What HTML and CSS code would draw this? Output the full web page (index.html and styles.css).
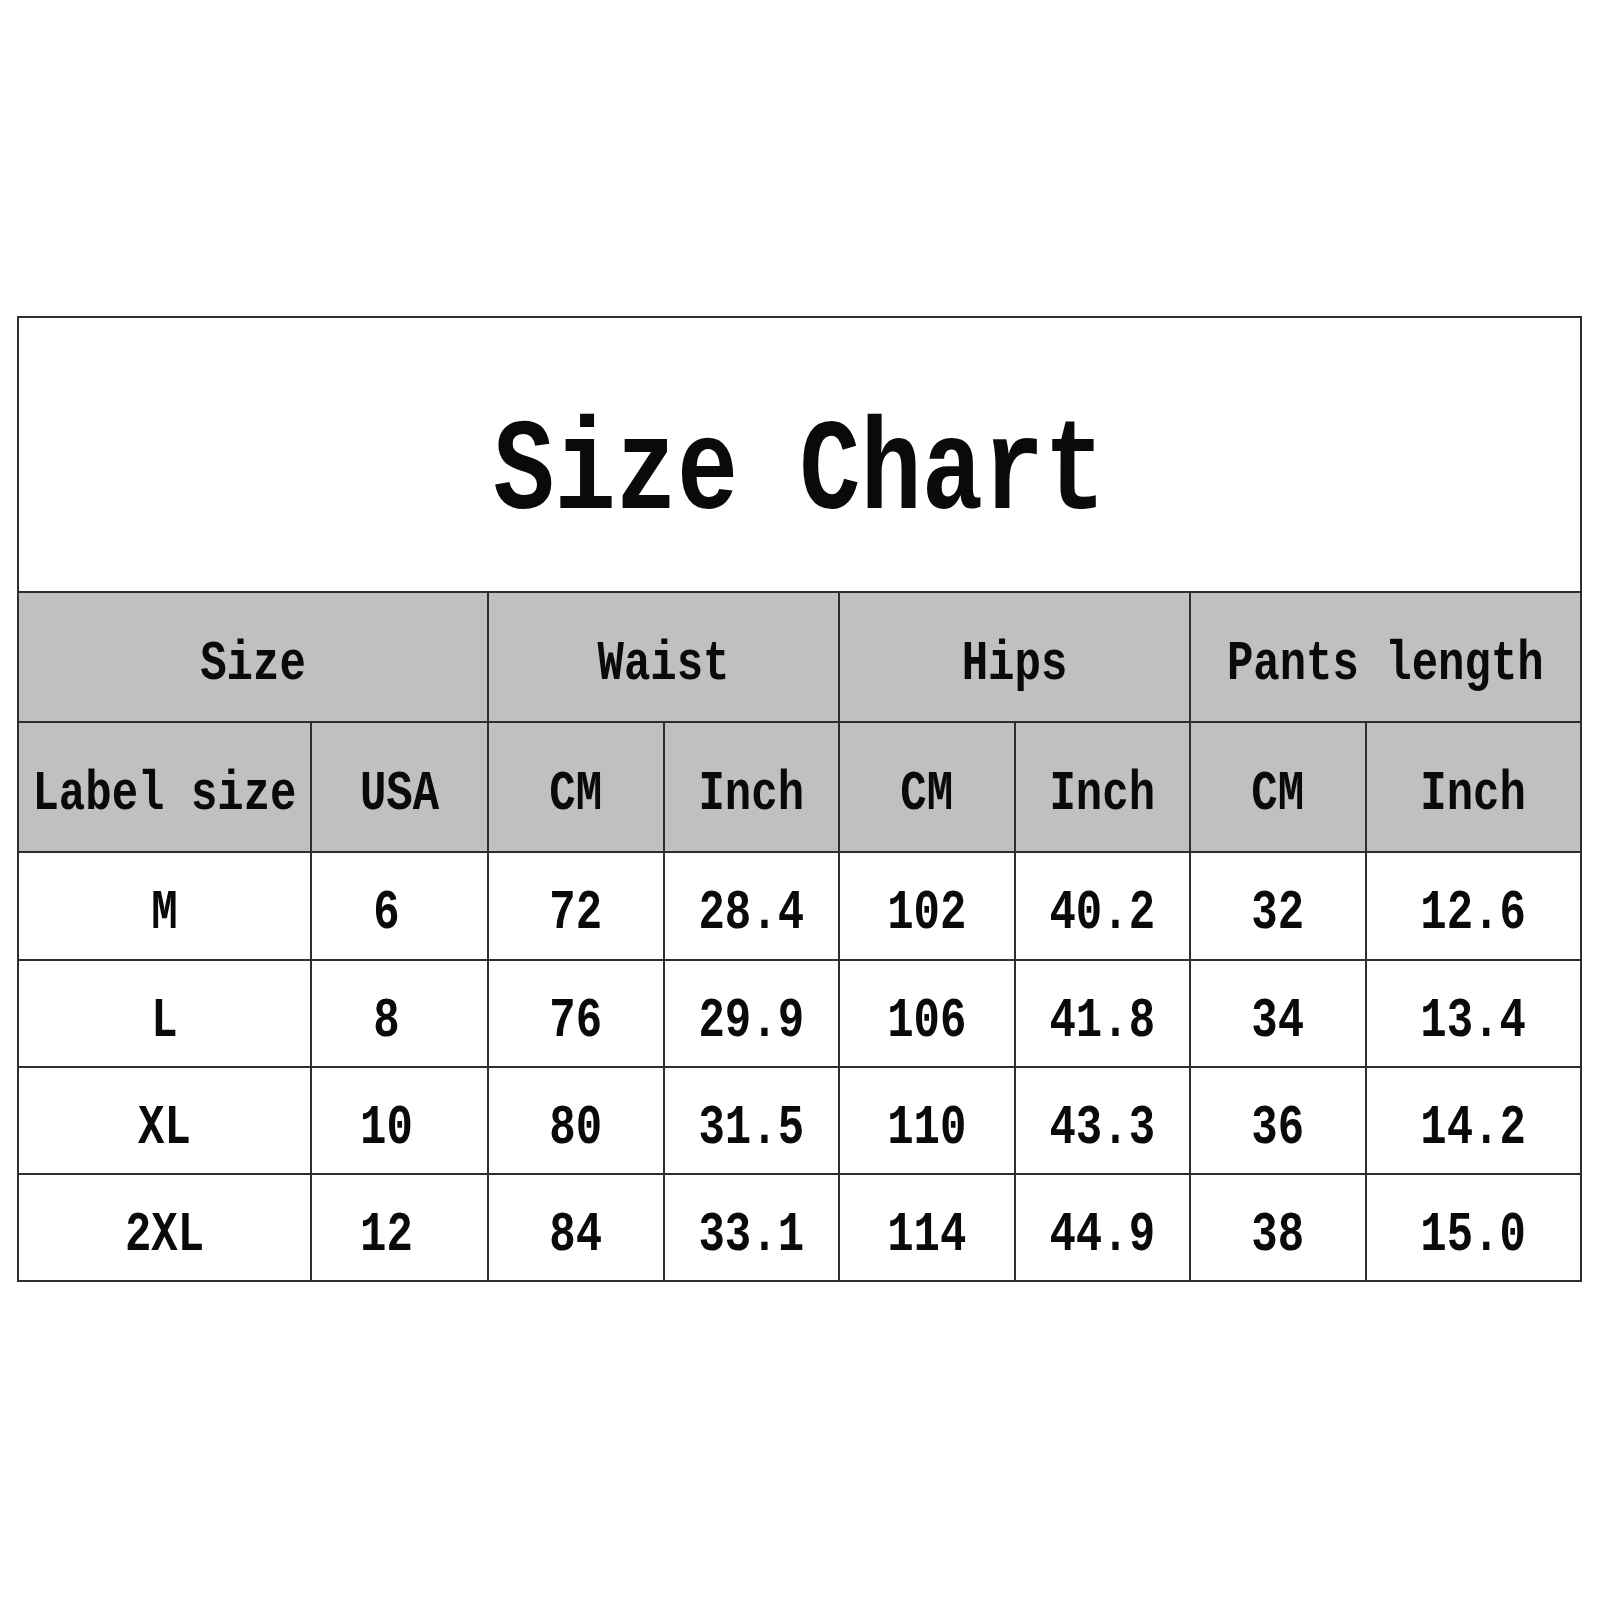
FILE: index.html
```html
<!DOCTYPE html>
<html lang="en">
<head>
<meta charset="utf-8">
<title>Size Chart</title>
<link rel="stylesheet" href="styles.css">
</head>
<body>
<div class="page">
  <table class="chart">
    <colgroup>
      <col class="c-label">
      <col class="c-usa">
      <col class="c-std">
      <col class="c-std">
      <col class="c-std">
      <col class="c-std">
      <col class="c-std">
      <col class="c-last">
    </colgroup>
    <tr class="title-row">
      <td colspan="8" class="title"><span class="t">Size Chart</span></td>
    </tr>
    <tr class="head-row">
      <th colspan="2"><span class="t">Size</span></th>
      <th colspan="2"><span class="t">Waist</span></th>
      <th colspan="2"><span class="t">Hips</span></th>
      <th colspan="2"><span class="t">Pants length</span></th>
    </tr>
    <tr class="head-row">
      <th><span class="t">Label size</span></th>
      <th><span class="t">USA</span></th>
      <th><span class="t">CM</span></th>
      <th><span class="t">Inch</span></th>
      <th><span class="t">CM</span></th>
      <th><span class="t">Inch</span></th>
      <th><span class="t">CM</span></th>
      <th><span class="t">Inch</span></th>
    </tr>
    <tr class="data-row r1">
      <td><span class="t">M</span></td>
      <td class="usa"><span class="t">6</span></td>
      <td><span class="t">72</span></td>
      <td><span class="t">28.4</span></td>
      <td><span class="t">102</span></td>
      <td><span class="t">40.2</span></td>
      <td><span class="t">32</span></td>
      <td><span class="t">12.6</span></td>
    </tr>
    <tr class="data-row">
      <td><span class="t">L</span></td>
      <td class="usa"><span class="t">8</span></td>
      <td><span class="t">76</span></td>
      <td><span class="t">29.9</span></td>
      <td><span class="t">106</span></td>
      <td><span class="t">41.8</span></td>
      <td><span class="t">34</span></td>
      <td><span class="t">13.4</span></td>
    </tr>
    <tr class="data-row">
      <td><span class="t">XL</span></td>
      <td class="usa"><span class="t">10</span></td>
      <td><span class="t">80</span></td>
      <td><span class="t">31.5</span></td>
      <td><span class="t">110</span></td>
      <td><span class="t">43.3</span></td>
      <td><span class="t">36</span></td>
      <td><span class="t">14.2</span></td>
    </tr>
    <tr class="data-row">
      <td><span class="t">2XL</span></td>
      <td class="usa"><span class="t">12</span></td>
      <td><span class="t">84</span></td>
      <td><span class="t">33.1</span></td>
      <td><span class="t">114</span></td>
      <td><span class="t">44.9</span></td>
      <td><span class="t">38</span></td>
      <td><span class="t">15.0</span></td>
    </tr>
  </table>
</div>
</body>
</html>
```

FILE: styles.css
```css
html, body {
  margin: 0;
  padding: 0;
  background: #ffffff;
}

.page {
  width: 1601px;
  height: 1601px;
  box-sizing: border-box;
  padding: 316px 0 0 17px;
}

.chart {
  border-collapse: collapse;
  table-layout: fixed;
  width: 1563px;
  font-family: "Liberation Mono", "Courier New", monospace;
  font-weight: bold;
  color: #0a0a0a;
}

.c-label { width: 293px; }
.c-usa { width: 177px; }
.c-std { width: 175.5px; }
.c-last { width: 215px; }

.chart td,
.chart th {
  border: 2px solid #2e2e2e;
  padding: 14px 0 0 0;
  text-align: center;
  vertical-align: middle;
  font-size: 44px;
  line-height: 1;
  font-weight: bold;
  white-space: pre;
}

.chart th {
  background: #c0c0c0;
}

.t {
  display: inline-block;
  transform: scaleY(1.27);
}

.title-row { height: 275px; }
.chart .title {
  font-size: 102px;
  padding-top: 38px;
}

.head-row { height: 130px; }
.data-row { height: 107px; }
.data-row.r1 { height: 108px; }

.chart td.usa {
  padding-right: 26px;
}
```
